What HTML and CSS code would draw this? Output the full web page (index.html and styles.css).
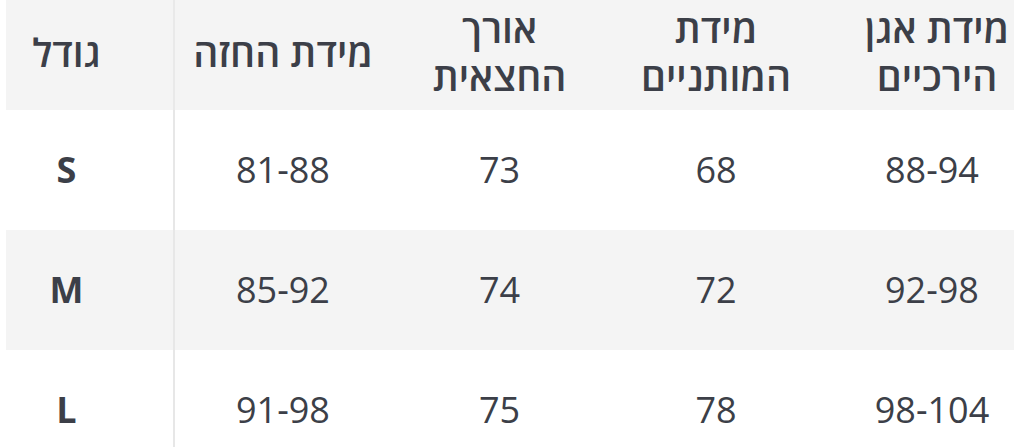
FILE: index.html
```html
<!DOCTYPE html>
<html lang="he" dir="rtl">
<head>
<meta charset="utf-8">
<title>טבלת מידות</title>
<link rel="stylesheet" href="styles.css">
</head>
<body>
<div class="wrap">
  <table class="sizes">
    <colgroup>
      <col class="c-hips">
      <col class="c-waist">
      <col class="c-skirt">
      <col class="c-chest">
      <col class="c-size">
    </colgroup>
    <thead>
      <tr>
        <th class="hips">מידת אגן הירכיים</th>
        <th>מידת המותניים</th>
        <th>אורך החצאית</th>
        <th>מידת החזה</th>
        <th class="size">גודל</th>
      </tr>
    </thead>
    <tbody>
      <tr>
        <td class="hips">88-94</td>
        <td>68</td>
        <td>73</td>
        <td>81-88</td>
        <td class="size">S</td>
      </tr>
      <tr class="alt">
        <td class="hips">92-98</td>
        <td>72</td>
        <td>74</td>
        <td>85-92</td>
        <td class="size">M</td>
      </tr>
      <tr>
        <td class="hips">98-104</td>
        <td>78</td>
        <td>75</td>
        <td>91-98</td>
        <td class="size">L</td>
      </tr>
    </tbody>
  </table>
</div>
</body>
</html>
```

FILE: styles.css
```css
html, body {
  margin: 0;
  padding: 0;
  background: #ffffff;
}

body {
  font-family: "Open Sans", "Noto Sans", "DejaVu Sans", sans-serif;
  color: #3c3f48;
  overflow: hidden;
}

.wrap {
  padding: 0 10px 0 6px;
}

.sizes {
  width: 1008px;
  table-layout: fixed;
  border-collapse: separate;
  border-spacing: 0;
  font-size: 36px;
  line-height: 48px;
}

.c-hips { width: 190px; }
.c-waist { width: 216px; }
.c-skirt { width: 217px; }
.c-chest { width: 216px; }
.c-size { width: 169px; }

.sizes th,
.sizes td {
  box-sizing: border-box;
  padding: 0;
  text-align: center;
  vertical-align: middle;
}

.sizes thead th {
  height: 110px;
  padding: 0 14px 6px;
  background: #f4f4f4;
  font-size: 39px;
  font-weight: 600;
}

.sizes tbody td {
  height: 120px;
  font-weight: 400;
}

.sizes tbody tr.alt td {
  background: #f4f4f4;
}

.sizes thead .hips {
  padding-left: 36px;
  padding-right: 0;
}

.sizes tbody .hips {
  padding-left: 26px;
  padding-right: 0;
}

.sizes thead .size,
.sizes tbody .size {
  padding-left: 0;
  padding-right: 46px;
  border-right: 2px solid #e7e7e7;
}

.sizes tbody .size {
  font-weight: 700;
}

.sizes thead .size {
  border-right-color: #e9e9e9;
}
```
